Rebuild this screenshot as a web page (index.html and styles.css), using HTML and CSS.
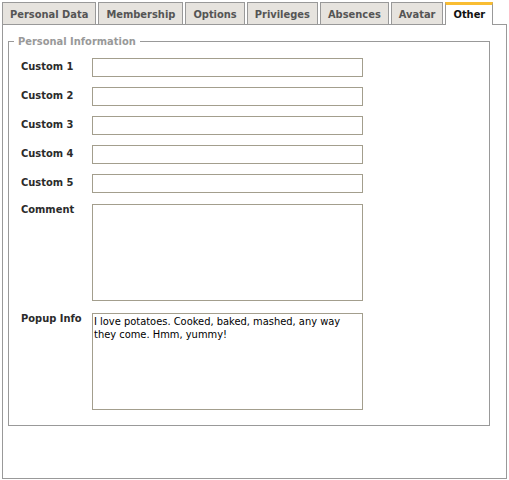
FILE: index.html
```html
<!DOCTYPE html>
<html>
<head>
    <meta charset="UTF-8">
    <title>Edit Member</title>
    <link rel="stylesheet" href="styles.css">
</head>
<body>
    <div class="tabs">
        <div class="tab">Personal Data</div>
        <div class="tab">Membership</div>
        <div class="tab">Options</div>
        <div class="tab">Privileges</div>
        <div class="tab">Absences</div>
        <div class="tab">Avatar</div>
        <div class="tab active">Other</div>
    </div>
    <div class="panel">
        <fieldset class="group">
            <legend>Personal Information</legend>
            <div class="form">
                <label class="field-label">Custom 1</label>
                <input class="text" type="text">
                <label class="field-label">Custom 2</label>
                <input class="text" type="text">
                <label class="field-label">Custom 3</label>
                <input class="text" type="text">
                <label class="field-label">Custom 4</label>
                <input class="text" type="text">
                <label class="field-label">Custom 5</label>
                <input class="text" type="text">
                <label class="field-label top">Comment</label>
                <textarea class="area"></textarea>
                <label class="field-label top next">Popup Info</label>
                <textarea class="area next">I love potatoes. Cooked, baked, mashed, any way they come. Hmm, yummy!</textarea>
            </div>
        </fieldset>
    </div>
</body>
</html>
```

FILE: styles.css
```css
body {
    margin: 0;
    padding: 2px;
    background-color: #fff;
    font-family: "DejaVu Sans Condensed", "DejaVu Sans", sans-serif;
    font-size: 11px;
    color: #333;
}
.tabs {
    display: flex;
    gap: 2px;
    height: 22px;
}
.tab {
    box-sizing: border-box;
    height: 22px;
    padding: 5px 7px 0;
    border: 1px solid #999;
    border-bottom: none;
    background-color: #e6e3de;
    color: #555;
    font-weight: bold;
    line-height: 13px;
}
.tab.active {
    height: 23px;
    border-top: 3px solid #f9bd32;
    padding-top: 3px;
    background-color: #fff;
    color: #111;
    position: relative;
    z-index: 1;
}
.panel {
    box-sizing: border-box;
    width: 505px;
    height: 455px;
    border: 1px solid #999;
    padding: 10px 0 0 5px;
}
.group {
    box-sizing: border-box;
    width: 482px;
    margin: 0;
    padding: 10px 12px 15px 12px;
    border: 1px solid #999;
}
.group legend {
    margin-left: -7px;
    padding: 0 4px;
    color: #999;
    font-weight: bold;
}
.form {
    display: grid;
    grid-template-columns: 71px 271px;
    row-gap: 10px;
    align-items: start;
}
.field-label {
    padding-top: 2px;
    font-weight: bold;
    line-height: 13px;
    color: #2b2b2b;
}
.field-label.top {
    padding-top: 0;
}
.field-label.next {
    margin-top: 1px;
}
.text {
    box-sizing: border-box;
    width: 271px;
    height: 19px;
    margin: 0;
    border: 1px solid #a39e8d;
    font: inherit;
}
.area {
    box-sizing: border-box;
    width: 271px;
    height: 97px;
    margin: 1px 0 0;
    padding: 1px;
    border: 1px solid #a39e8d;
    resize: none;
    font-family: inherit;
    font-size: 11px;
    line-height: 13px;
    color: #000;
}
.area.next {
    margin-top: 2px;
}
```
